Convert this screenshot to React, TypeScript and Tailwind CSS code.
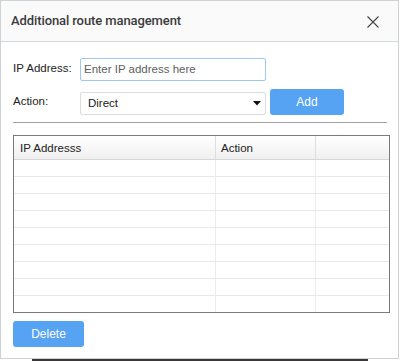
import React from "react";

export default function App() {
  const rows = Array.from({ length: 9 });
  return (
    <div className="w-[400px] h-[361px] bg-white overflow-hidden font-['Liberation_Sans',Arial,sans-serif] text-[#222]">
      <div className="w-[399px] h-[359px] border border-[#cdd2d4] bg-white flex flex-col">
        <div className="h-[41px] shrink-0 bg-[#fafafa] border-b border-[#d0d8db] flex items-center justify-between pl-[10px] pr-[19px]">
          <span className="font-['Roboto',sans-serif] font-medium text-[13px] text-[#3a3a3a] tracking-[-0.1px]">
            Additional route management
          </span>
          <svg width="12" height="12" viewBox="0 0 12 12" className="mt-[1px]">
            <path d="M0.5 0.5 L11.5 11.5 M11.5 0.5 L0.5 11.5" stroke="#444" strokeWidth="1.1" fill="none" />
          </svg>
        </div>
        <div className="pl-[12px] pt-[16px] flex flex-col">
          <div className="flex items-center h-[23px]">
            <span className="w-[67px] text-[11.5px] -mt-[2px]">IP Address:</span>
            <div className="w-[186px] h-[23px] border border-[#9ec8ec] rounded-[2px] flex items-center pl-[3px] text-[11.5px] text-[#5e5e5e]">
              Enter IP address here
            </div>
          </div>
          <div className="flex items-end h-[26px] mt-[8px]">
            <span className="w-[67px] text-[11.5px] self-center">Action:</span>
            <div className="w-[186px] h-[23px] border border-[#dcdcdc] rounded-[2px] flex items-center justify-between pl-[7px] pr-[4px] text-[11.5px]">
              <span>Direct</span>
              <svg width="8" height="5" viewBox="0 0 8 5">
                <path d="M0 0 L8 0 L4 4.5 Z" fill="#111" />
              </svg>
            </div>
            <div className="ml-[4px] w-[74px] h-[26px] rounded-[3px] bg-[#55a3f2] text-white text-[12px] flex items-center justify-center">
              Add
            </div>
          </div>
          <div className="mt-[7px] w-[374px] border-t border-[#a3a3a3]" />
          <div className="mt-[12px] w-[377px] h-[178px] border border-[#7a7a7a] overflow-hidden flex flex-col">
            <div className="h-[24px] shrink-0 flex border-b border-[#d6d6d6] bg-gradient-to-b from-[#ffffff] to-[#f0f0f0] text-[11.5px]">
              <div className="w-[202px] border-r border-[#dedede] flex items-center pl-[6px] pt-[2px]">IP Addresss</div>
              <div className="w-[100px] border-r border-[#dedede] flex items-center pl-[5px] pt-[2px]">Action</div>
              <div className="flex-1" />
            </div>
            {rows.map((_, i) => (
              <div key={i} className="h-[17px] shrink-0 flex border-b border-[#e8e8e8]">
                <div className="w-[202px] border-r border-[#ececec]" />
                <div className="w-[100px] border-r border-[#ececec]" />
                <div className="flex-1" />
              </div>
            ))}
          </div>
          <div className="mt-[8px] w-[71px] h-[26px] rounded-[3px] bg-[#55a3f2] text-white text-[12px] flex items-center justify-center">
            Delete
          </div>
        </div>
      </div>
      <div className="ml-[32px] w-[336px] h-[2px] bg-[#3a3838]" />
    </div>
  );
}
